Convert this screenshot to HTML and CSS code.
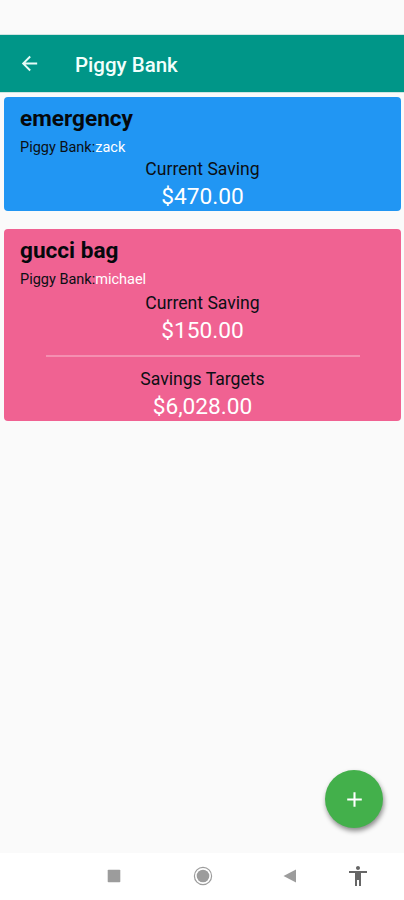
FILE: index.html
```html
<!DOCTYPE html>
<html lang="en">
<head>
  <meta charset="UTF-8" />
  <meta name="viewport" content="width=device-width, initial-scale=1.0"/>
  <title>Piggy Bank</title>
  <link rel="stylesheet" href="styles.css">
</head>
<body>
  <header>
    <svg class="back" viewBox="0 0 24 24" aria-label="Back"><path d="M20 11H7.83l5.59-5.59L12 4l-8 8 8 8 1.41-1.41L7.83 13H20v-2z"/></svg>
    <h1>Piggy Bank</h1>
  </header>

  <main>
    <section class="card blue">
      <h2>emergency</h2>
      <p class="owner">Piggy Bank:<span>zack</span></p>
      <p class="label">Current Saving</p>
      <p class="amount">$470.00</p>
    </section>

    <section class="card pink">
      <h2>gucci bag</h2>
      <p class="owner">Piggy Bank:<span>michael</span></p>
      <p class="label">Current Saving</p>
      <p class="amount">$150.00</p>
      <hr>
      <p class="label">Savings Targets</p>
      <p class="amount">$6,028.00</p>
    </section>
  </main>

  <button class="add" aria-label="Add">
    <svg viewBox="0 0 24 24"><path d="M19 13h-6v6h-2v-6H5v-2h6V5h2v6h6v2z"/></svg>
  </button>

  <nav>
    <svg viewBox="0 0 24 24"><rect x="5.7" y="5.7" width="12.6" height="12.6" rx="0.8"/></svg>
    <svg viewBox="0 0 24 24"><circle class="ring" cx="12" cy="12" r="8.6"/><circle cx="12" cy="12" r="6.3"/></svg>
    <svg viewBox="0 0 24 24"><path d="M5.5 12 18 5.5v13z"/></svg>
    <svg class="person" viewBox="0 0 24 24"><path d="M12 2c1.1 0 2 .9 2 2s-.9 2-2 2-2-.9-2-2 .9-2 2-2zm9 7h-6v13h-2v-6h-2v6H9V9H3V7h18v2z"/></svg>
  </nav>
</body>
</html>
```
FILE: styles.css
```css
* {
  box-sizing: border-box;
}
body {
  font-family: Roboto, "Liberation Sans", sans-serif;
  margin: 0;
  height: 900px;
  padding-top: 35px;
  background-color: #fafafa;
  color: #0b0f14;
  display: flex;
  flex-direction: column;
}
h1, h2, p {
  margin: 0;
  white-space: nowrap;
}
header {
  height: 57px;
  padding-left: 18px;
  background-color: #009688;
  color: #f2fffc;
  display: flex;
  align-items: center;
  gap: 34px;
  box-shadow: 0 0 1px #00796b;
}
.back {
  width: 23px;
  height: 23px;
  fill: #e6fbf7;
}
h1 {
  font-size: 20.5px;
  font-weight: 500;
  line-height: 26px;
  padding-top: 3px;
}
main {
  flex: 1;
  padding: 5px 3px 0 4px;
}
.card {
  height: 113.5px;
  padding: 9px 0 0 16px;
  border-radius: 4px;
}
.blue {
  background-color: #2196f3;
}
.pink {
  height: 191.5px;
  margin-top: 18.5px;
  background-color: #f06292;
}
h2 {
  font-size: 22.6px;
  font-weight: 700;
  line-height: 26px;
  color: #05080c;
}
.owner {
  font-size: 14.5px;
  line-height: 18px;
  margin-top: 7px;
}
.owner span {
  color: #fff;
}
.label, .amount {
  margin-left: -16px;
  text-align: center;
}
.label {
  font-size: 17.6px;
  line-height: 22px;
  margin-top: 1px;
}
.pink .owner + .label {
  margin-top: 3px;
}
.amount {
  font-size: 22.7px;
  line-height: 28px;
  margin-top: 3px;
  color: #fff;
}
hr {
  height: 2px;
  margin: 10px 41px 11px 26px;
  border: 0;
  background-color: #f58fb1;
}
.add {
  position: absolute;
  left: 325px;
  top: 770px;
  width: 58px;
  height: 58px;
  padding: 0;
  border: 0;
  border-radius: 50%;
  background-color: #43b04b;
  box-shadow: 1px 3px 5px rgba(0, 0, 0, 0.45);
  display: flex;
  align-items: center;
  justify-content: center;
}
.add svg {
  width: 25px;
  height: 25px;
  fill: #fff;
}
nav {
  height: 47px;
  padding: 0 34px 2px 102px;
  background-color: #fff;
  display: grid;
  grid-template-columns: 89px 87px 68px 24px;
  align-items: center;
}
nav svg {
  width: 24px;
  height: 24px;
  fill: #9c9c9c;
}
nav .ring {
  fill: none;
  stroke: #9c9c9c;
  stroke-width: 1.2;
}
nav .person {
  fill: #666;
}
```
